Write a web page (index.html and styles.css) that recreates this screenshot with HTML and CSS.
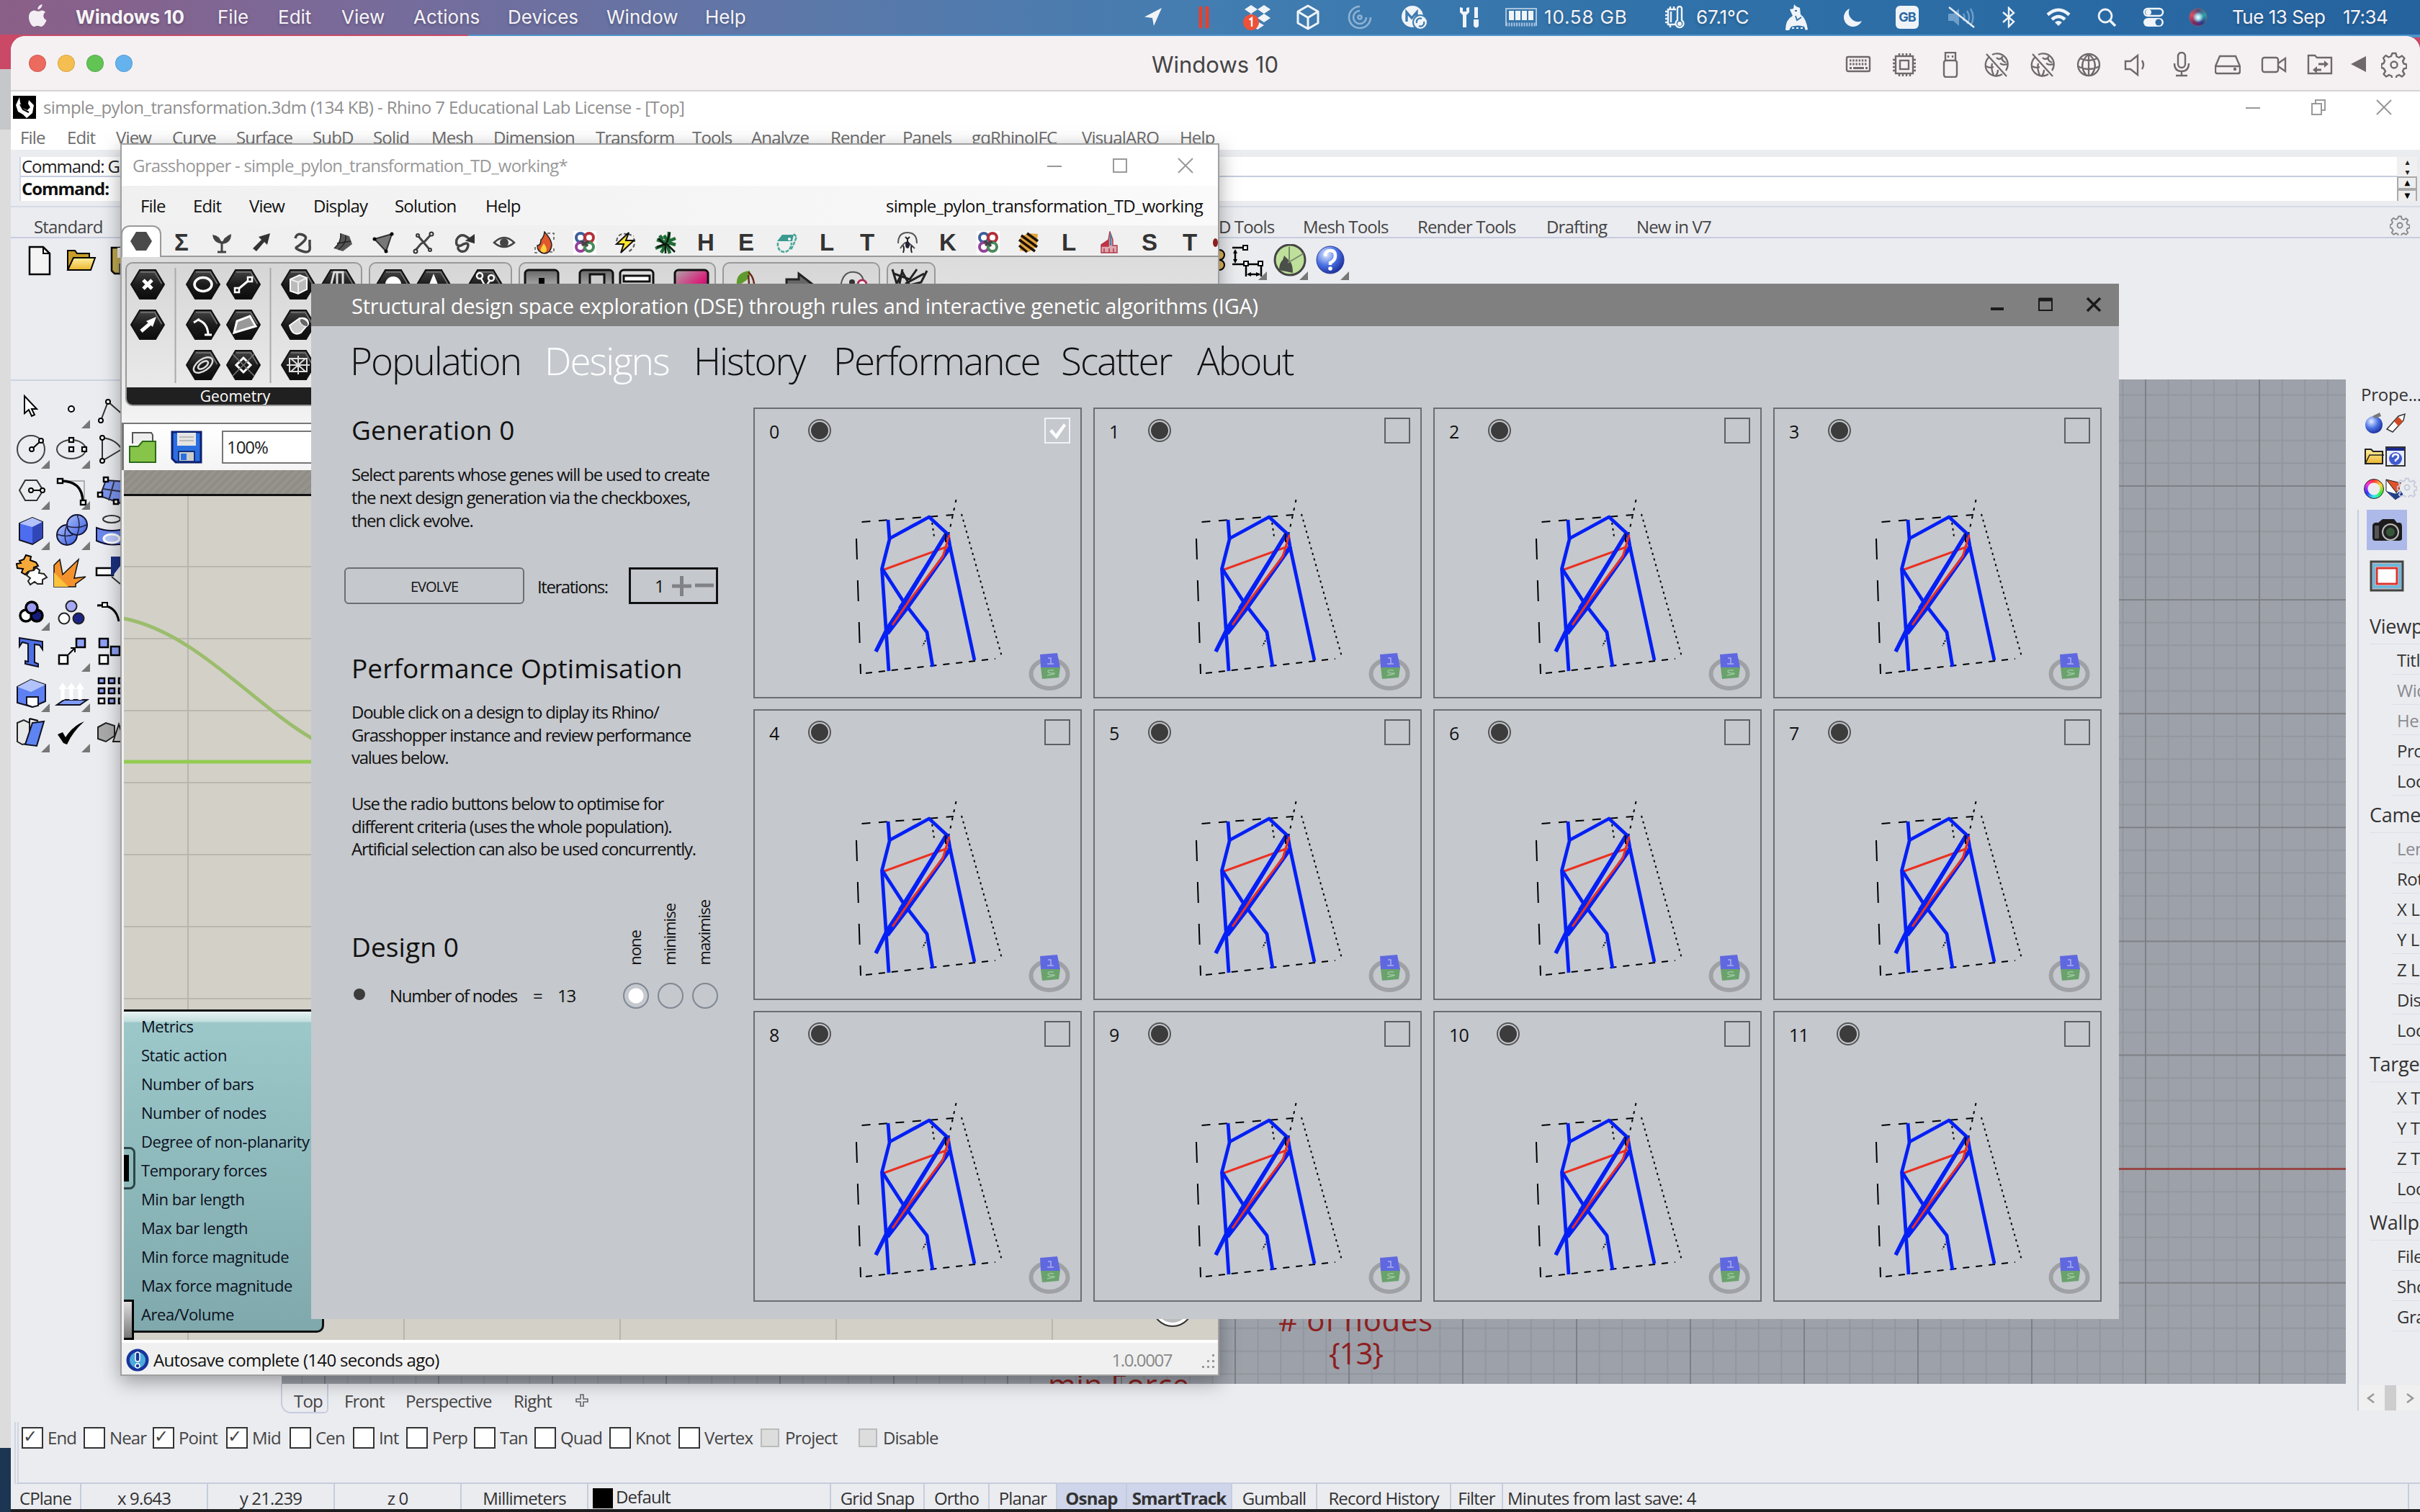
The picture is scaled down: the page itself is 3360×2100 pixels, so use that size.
FILE: index.html
```html
<!DOCTYPE html>
<html lang="en">
<head>
<meta charset="utf-8">
<title>Windows 10</title>
<link rel="stylesheet" href="styles.css">
</head>
<body>
<svg width="0" height="0" class="defs">
  <defs>
    <linearGradient id="gBlue" x1="0" y1="0" x2="1" y2="1"><stop offset="0" stop-color="#a9bdf8"/><stop offset="1" stop-color="#3a5fe0"/></linearGradient>
    <linearGradient id="gHex" x1="0" y1="0" x2="0" y2="1"><stop offset="0" stop-color="#454545"/><stop offset=".5" stop-color="#1c1c1c"/><stop offset="1" stop-color="#0c0c0c"/></linearGradient>
    <linearGradient id="gYel" x1="0" y1="0" x2="0" y2="1"><stop offset="0" stop-color="#fff0a0"/><stop offset="1" stop-color="#eab530"/></linearGradient>
    <linearGradient id="gGrey" x1="0" y1="0" x2="0" y2="1"><stop offset="0" stop-color="#666"/><stop offset="1" stop-color="#eee"/></linearGradient>
    <linearGradient id="gPink" x1="0" y1="0" x2=".8" y2="1"><stop offset="0" stop-color="#aaa"/><stop offset=".6" stop-color="#d8207a"/><stop offset="1" stop-color="#70106a"/></linearGradient>
    <radialGradient id="gBall" cx=".35" cy=".3" r=".8"><stop offset="0" stop-color="#e6eeff"/><stop offset=".5" stop-color="#4a72e4"/><stop offset="1" stop-color="#12228c"/></radialGradient>
    <symbol id="tri" viewBox="0 0 12 12"><path d="M12 0V12H0Z" fill="#777"/></symbol>
    <symbol id="hex" viewBox="0 0 48 42"><path d="M13 1H35L47 21L35 41H13L1 21Z" fill="url(#gHex)" stroke="#111" stroke-width="2"/><path d="M14 4H34L43.500 20" fill="none" stroke="#777" stroke-width="1.500"/></symbol>
    <symbol id="gear" viewBox="0 0 36 36"><g fill="none" stroke="currentColor" stroke-width="2.400"><circle cx="18" cy="18" r="4.500"/><path stroke-linejoin="round" d="M15.500 2h5l1 4.500 3.500 1.500 4-2.500 3.500 3.500-2.500 4 1.500 3.500 4 1v5l-4 1-1.500 3.500 2.500 4-3.500 3.500-4-2.500-3.500 1.500-1 4h-5l-1-4-3.500-1.500-4 2.500-3.500-3.500 2.500-4L3.500 23l-3-1v-5l3-1L5 12.500 3 8.500 6.500 5l4 2.500L14 6Z"/></g></symbol>
    <symbol id="netoff" viewBox="0 0 36 36"><g fill="none" stroke="currentColor" stroke-width="2.300"><path d="M7 8A15 15 0 0 0 26 31M12 4A15 15 0 0 1 31 26M4 3L32 34M18 8q3 4 8 0M26 6q-2 6 5 9M23 16q4 3 10 1M4 20q4 3 10 1M12 16q-2 8 2 16M20 25q0 5-3 8"/></g></symbol>
    <symbol id="pylon" viewBox="0 0 455 403">
      <g fill="none" stroke="#000" stroke-width="2">
        <path d="M150.500 158L278 148" stroke-dasharray="12 11.500"/>
        <path d="M143 181L149 369" stroke-dasharray="29 29"/>
        <path d="M156 368L336 348" stroke-dasharray="9 9"/>
        <path d="M289 147L345 345" stroke-dasharray="3 5"/>
        <path d="M281.500 127L262.500 216" stroke-dasharray="4 7.500"/>
        <path d="M247 151L251.500 182" stroke-dasharray="3 5"/>
        <path d="M241 319L235 330" stroke-dasharray="2 2"/>
      </g>
      <path d="M179 225L270 192" fill="none" stroke="#ea3022" stroke-width="3"/>
      <g fill="none" stroke="#0420f5" stroke-width="4.800" stroke-linejoin="round">
        <path d="M187 155L189 182L178.500 223L188 365"/>
        <path d="M189 181L244 151L270 175L273 192L307 350"/>
        <path d="M179 223L210 271L241 311L249 359"/>
        <path d="M268 174L211 268L186 306L170 338" stroke-width="5.500"/>
        <path d="M274 192L216 274L186 313" stroke-width="5.500"/>
        <path d="M264 181L203 278"/>
      </g>
      <path d="M272 176L263 206L216 268L193 301" fill="none" stroke="#ea3022" stroke-width="3"/>
      <path d="M267 174V186" stroke="#000" stroke-width="2"/>
      <ellipse cx="411" cy="369" rx="25.500" ry="20" fill="none" stroke="#9fa1a4" stroke-width="6"/>
      <path d="M398 342L422 340L426 360H399Z" fill="#6068e0"/><path d="M399 360H426L424 374L401 376Z" fill="#6aa26c"/>
      <path d="M409 347h4v8m-5 0h9" fill="none" stroke="#a9aeee" stroke-width="1.500"/><path d="M417 364q-8-1-8 1.500t7 2.500-8 3" fill="none" stroke="#9cc79e" stroke-width="1.500"/>
    </symbol>
  </defs>
</svg>

<header class="menubar">
  <svg class="apple" width="28" height="34" viewBox="0 0 28 34"><path fill="#f3eef3" d="M19.500 1c.3 3.500-2.500 7-6 7.200C13 5 16 1.500 19.500 1ZM24 12c-4 2.500-3.500 9 1.500 11-1.500 4.500-4.500 9-7.500 9-2 0-2.500-1.200-4.700-1.200S10.200 32 8.500 32C5 32 1 25 1 19c0-6 3.700-9.500 7.500-9.500 2.200 0 3.500 1.300 5.300 1.300 1.700 0 3-1.400 5.700-1.400 1.800 0 3.500 1 4.500 2.600Z"/></svg>
  <nav class="mac-menu"><b>Windows 10</b><span>File</span><span>Edit</span><span>View</span><span>Actions</span><span>Devices</span><span>Window</span><span>Help</span></nav>
  <div class="mac-status">
    <svg width="28" height="28" viewBox="0 0 28 28"><path fill="#f0f4f8" d="M26 1L2 13.500L13 15L15 26Z"/></svg>
    <svg width="18" height="32" viewBox="0 0 18 32"><path stroke="#e5412c" stroke-width="5" stroke-linecap="round" d="M4 3V29M13 3V29"/></svg>
    <svg width="42" height="38" viewBox="0 0 42 38"><path fill="#f0f4f8" d="M12 2l9 6-9 6-9-6zM30 2l9 6-9 6-9-6zM12 14l9 6-9 6-9-6zM30 14l9 6-9 6-9-6zM21 25l9 5-9 6-9-6z"/><circle cx="12" cy="26" r="11" fill="#ee5138"/><path d="M9.500 22.500L13 20V32" fill="none" stroke="#fff" stroke-width="2.400"/></svg>
    <svg width="32" height="36" viewBox="0 0 32 36"><path fill="none" stroke="#f0f4f8" stroke-width="3" stroke-linejoin="round" d="M16 2L30 10V26L16 34L2 26V10ZM2 10L16 18.500L30 10M16 18.500V34"/></svg>
    <svg width="34" height="34" viewBox="0 0 34 34"><g fill="none" stroke="#8fb2d3" stroke-width="2.600"><path d="M17 2A15 15 0 1 0 32 17"/><path d="M17 8A9 9 0 1 0 26 17"/><circle cx="17" cy="17" r="2.500"/></g></svg>
    <svg width="38" height="34" viewBox="0 0 38 34"><circle cx="16" cy="16" r="15" fill="#f0f4f8"/><path d="M8 23V10L15 18L22 10V16" fill="none" stroke="#3e7bb0" stroke-width="3.400"/><circle cx="27" cy="24" r="10" fill="#f0f4f8" stroke="#3e7bb0" stroke-width="2"/><path d="M22 25a5 5 0 0 1 7-6M32 23a5 5 0 0 1-7 6" fill="none" stroke="#3e7bb0" stroke-width="2.200"/></svg>
    <svg width="30" height="32" viewBox="0 0 30 32"><path fill="#f0f4f8" d="M2 2v7l4 4v17h5V13l4-4V2l-4 1v5H6V3zM22 2h5v15h-5zM21 19h7v9q-3 5-7 0z"/></svg>
    <svg width="44" height="26" viewBox="0 0 44 26"><path d="M1 25V1H43V25" fill="none" stroke="#a9c4de" stroke-width="2"/><path d="M1 23H43" stroke="#a9c4de" stroke-width="5" stroke-dasharray="2 1.500"/><path d="M5 4h7v13H5zM14 4h7v13h-7zM23 4h7v13h-7zM32 4h7v13h-7z" fill="#f0f4f8"/></svg>
    <span class="val mem">10.58 GB</span>
    <svg width="28" height="32" viewBox="0 0 28 32"><g fill="none" stroke="#f0f4f8" stroke-width="2.400"><path d="M16 5H5V26H15M9 8v15M1 8h4M1 13h4M1 18h4M1 23h4M8 1v4M13 1v4M8 26v4"/><path d="M18 20V4a3 3 0 0 1 6 0v16a5.500 5.500 0 1 1-6 0Z"/></g><circle cx="21" cy="25" r="3" fill="#f0f4f8"/></svg>
    <span class="val temp">67.1°C</span>
    <svg width="36" height="38" viewBox="0 0 36 38"><path fill="#f0f4f8" d="M14 1l3 3 5 2 1 9q8 6 10 21l-3 1-2-5q-8-3-18 0l-3 5-5 0Q2 22 12 17l-4-9 5-1z"/><path d="M15 10h3M16 17l2 6 6-4" fill="none" stroke="#2f6fa8" stroke-width="1.800"/><path d="M11 34h3M17 34h3M23 34h3" stroke="#f0f4f8" stroke-width="2"/></svg>
    <svg width="28" height="28" viewBox="0 0 28 28"><path fill="#f0f4f8" d="M9 2A13 13 0 1 0 26 19A13 13 0 0 1 9 2Z"/></svg>
    <b class="gb">GB</b>
    <svg width="38" height="30" viewBox="0 0 38 30"><path d="M1 10h7l8-7v24l-8-7H1z" fill="#6f9fca"/><path d="M22 10q3 5 0 10M27 6q6 9 0 18M32 3q7 12 0 24" fill="none" stroke="#6f9fca" stroke-width="2.400"/><path d="M2 1L37 29" stroke="#e8eef5" stroke-width="2.400"/></svg>
    <svg width="20" height="30" viewBox="0 0 20 30"><path fill="none" stroke="#f0f4f8" stroke-width="2.400" d="M2 8L17 21L10 28V2L17 9L2 22"/></svg>
    <svg width="34" height="26" viewBox="0 0 34 26"><g fill="none" stroke="#f0f4f8" stroke-width="4.500"><path d="M2 9.500Q17-4 32 9.500M8 16q9-8 18 0"/></g><path d="M12 20q5-4 10 0l-5 5z" fill="#f0f4f8"/></svg>
    <svg width="26" height="26" viewBox="0 0 26 26"><g fill="none" stroke="#f0f4f8" stroke-width="2.800"><circle cx="11" cy="11" r="9"/><path d="M17.500 17.500L25 25" stroke-width="3.500"/></g></svg>
    <svg width="30" height="28" viewBox="0 0 30 28"><rect x="2" y="2" width="26" height="10" rx="5" fill="none" stroke="#f0f4f8" stroke-width="2.500"/><circle cx="8" cy="7" r="4" fill="#f0f4f8"/><rect x="1" y="15" width="28" height="12" rx="6" fill="#f0f4f8"/><circle cx="22" cy="21" r="4.500" fill="#2c69a4"/></svg>
    <i class="siri"></i>
    <span class="date">Tue 13 Sep</span><span class="val">17:34</span>
  </div>
</header>
<div class="behind"></div>

<main class="vm">
  <div class="vm-title">
    <div class="lights"><i></i><i></i><i></i><i></i></div>
    <h1>Windows 10</h1>
    <div class="vm-tools">
      <svg viewBox="0 0 36 36"><rect x="2" y="7" width="32" height="20" rx="2" fill="none" stroke="currentColor" stroke-width="2.400"/><path d="M6 12h24M6 17h24" stroke="currentColor" stroke-width="3" stroke-dasharray="2.500 1.700"/><path d="M6 22.500h3M11 22.500h15M28 22.500h3" stroke="currentColor" stroke-width="3"/></svg>
      <svg viewBox="0 0 36 36"><g fill="none" stroke="currentColor" stroke-width="2.400"><rect x="6" y="6" width="24" height="24"/><rect x="12" y="12" width="12" height="12"/><path d="M11 2v4M16 2v4M21 2v4M26 2v4M11 30v4M16 30v4M21 30v4M26 30v4M2 11h4M2 16h4M2 21h4M2 26h4M30 11h4M30 16h4M30 21h4M30 26h4"/></g></svg>
      <svg viewBox="0 0 36 36"><g fill="none" stroke="currentColor" stroke-width="2.400"><path d="M11 12V1H25V12"/><rect x="9" y="12" width="18" height="23" rx="3"/><path d="M15 5v3M21 5v3"/></g></svg>
      <svg viewBox="0 0 36 36"><use href="#netoff"/></svg>
      <svg viewBox="0 0 36 36"><use href="#netoff"/></svg>
      <svg viewBox="0 0 36 36"><g fill="none" stroke="currentColor" stroke-width="2.300"><circle cx="18" cy="18" r="15"/><path d="M18 3V33M3 20q15 8 30 0M6 9q12 6 24 0M18 3q-16 14-3 30M18 3q16 14 3 30"/></g></svg>
      <svg viewBox="0 0 36 36"><path fill="none" stroke="currentColor" stroke-width="2.400" d="M4 13v11h7l10 8V5L11 13ZM27 12q4 6 0 12"/></svg>
      <svg viewBox="0 0 36 36"><g fill="none" stroke="currentColor" stroke-width="2.400"><rect x="13" y="1" width="10" height="21" rx="5"/><path d="M8 16q0 11 10 11t10-11M18 27v6M10 33h16"/></g></svg>
      <svg viewBox="0 0 36 36"><g fill="none" stroke="currentColor" stroke-width="2.400"><path d="M1 20L7 6H29L35 20V27Q35 30 32 30H4Q1 30 1 27ZM1 20H35"/><circle cx="28" cy="24" r="1"/></g></svg>
      <svg viewBox="0 0 36 36"><g fill="none" stroke="currentColor" stroke-width="2.400"><rect x="2" y="8" width="22" height="20" rx="3"/><path d="M24 16L34 9V27L24 20"/></g></svg>
      <svg viewBox="0 0 36 36"><path fill="none" stroke="currentColor" stroke-width="2.400" d="M2 30V5H11L14 8H34V30Z"/><path fill="none" stroke="currentColor" stroke-width="3" d="M16 17h9M11 25h9"/><path fill="currentColor" d="M24 12l6 5-6 5zM14 20l-6 5 6 5z"/></svg>
      <svg viewBox="0 0 36 36"><path fill="currentColor" d="M28 6V28L7 17Z"/></svg>
      <svg viewBox="0 0 36 36"><use href="#gear"/></svg>
    </div>
  </div>

  <div class="rh-title">
    <svg width="32" height="32" viewBox="0 0 32 32"><rect width="32" height="32" fill="#000"/><path fill="#fff" d="M9 2l-5 11 3 9 7 4 5 5 8-7 2-11-7-7-1 5 3 5-4 4-7-3-3-8z"/><path d="M10 12l4 7 8 4" fill="none" stroke="#000" stroke-width="2"/></svg>
    <span>simple_pylon_transformation.3dm (134 KB) - Rhino 7 Educational Lab License - [Top]</span>
    <div class="winbtns rh-btns"><svg viewBox="0 0 24 24"><path d="M2 13H22"/></svg><svg viewBox="0 0 24 24"><path d="M3 7h13v15H3zM8 7V2H21V16H16"/></svg><svg viewBox="0 0 24 24"><path d="M2 2L22 22M22 2L2 22"/></svg></div>
  </div>
  <nav class="rh-menu"><span>File</span><span>Edit</span><span>View</span><span>Curve</span><span>Surface</span><span>SubD</span><span>Solid</span><span>Mesh</span><span>Dimension</span><span>Transform</span><span>Tools</span><span>Analyze</span><span>Render</span><span>Panels</span><span>gqRhinoIFC</span><span>VisualARQ</span><span>Help</span></nav>
  <section class="command">
    <div class="cmd-lines"><p>Command: G</p><p><b>Command:</b></p></div>
    <div class="cmd-scroll"><i>▴</i><i>▾</i><b>▲</b><b>▼</b></div>
  </section>
  <nav class="rh-tabs"><span class="std">Standard</span><span>3D Tools</span><span>Mesh Tools</span><span>Render Tools</span><span>Drafting</span><span>New in V7</span><svg width="28" height="28"><use href="#gear"/></svg></nav>
  <section class="rh-toolbar">
    <svg width="36" height="44" viewBox="0 0 36 44"><path d="M4 3H23L32 12V41H4Z" fill="#f4f4f4" stroke="#000" stroke-width="2.500"/><path d="M23 3V12H32" fill="none" stroke="#000" stroke-width="2"/></svg>
    <svg width="42" height="44" viewBox="0 0 42 44"><path d="M2 34V8H12L15 12H32V18" fill="#c99d28" stroke="#000" stroke-width="2"/><path d="M2 35L10 18H40L34 35Z" fill="url(#gYel)" stroke="#000" stroke-width="2"/></svg>
    <svg width="40" height="44" viewBox="0 0 40 44"><path d="M2 4H38V40H6L2 36Z" fill="#c0a94f" stroke="#000" stroke-width="2.500"/><path d="M10 4H32V18H10Z" fill="#eee"/><path d="M12 26H30V40H12Z" fill="#555"/></svg>
    <svg class="push" width="14" height="44" viewBox="0 0 14 44"><circle cx="5" cy="15" r="7" fill="#e0b65a" stroke="#000" stroke-width="2"/><circle cx="5" cy="29" r="7" fill="#e0b65a" stroke="#000" stroke-width="2"/></svg>
    <svg width="50" height="50" viewBox="0 0 50 50"><path d="M2 5H18M2 28H40M21 30V45M42 30V45M24 42H40M6 9V24" fill="none" stroke="#000" stroke-width="2.500"/><path d="M6 7l3 6H3zM6 27l3-6H3zM22 42l6-3v6zM41 42l-6-3v6z"/><g fill="#fff" stroke="#000" stroke-width="2"><rect x="17" y="2" width="6" height="6"/><rect x="18" y="24" width="6" height="6"/><rect x="38" y="24" width="6" height="6"/></g><use href="#tri" x="38" y="38" width="12" height="12"/></svg>
    <svg width="54" height="50" viewBox="0 0 54 50"><circle cx="25" cy="22" r="21" fill="#bfe09a" stroke="#444" stroke-width="3"/><path d="M10 36q0-10 5-14l2-6 6 6q6 4 6 18Z" fill="#4a4f4a"/><path d="M22 26L44 13M24 4v20" stroke="#7a8a70" stroke-width="2"/><use href="#tri" x="38" y="38" width="12" height="12"/></svg>
    <svg width="50" height="50" viewBox="0 0 50 50"><circle cx="20" cy="22" r="19" fill="url(#gBall)" stroke="#2a3a9a"/><path d="M13 17q0-8 7-8t7 7-7 10v3" fill="none" stroke="#fff" stroke-width="4.500"/><circle cx="20" cy="34" r="2.800" fill="#fff"/><use href="#tri" x="34" y="38" width="12" height="12"/></svg>
  </section>

  <section class="rh-main">
    <div class="palette">
      <svg viewBox="0 0 56 56"><path d="M19 10V34L25 29L29 38L33 36L29 28H36Z" fill="#fff" stroke="#000" stroke-width="2"/></svg>
      <svg viewBox="0 0 56 56"><circle cx="28" cy="28" r="4" fill="#fff" stroke="#000" stroke-width="2"/><use href="#tri" x="42" y="43" width="12" height="12"/></svg>
      <svg viewBox="0 0 56 56"><path d="M13 44L23 18L46 38" fill="none" stroke="#333" stroke-width="2"/><circle cx="13" cy="44" r="3" fill="#fff" stroke="#000" stroke-width="2"/><circle cx="23" cy="18" r="3" fill="#fff" stroke="#000" stroke-width="2"/></svg>
      <svg viewBox="0 0 56 56"><circle cx="28" cy="28" r="19" fill="none" stroke="#444" stroke-width="2"/><path d="M29 28L42 16" stroke="#000" stroke-width="2"/><circle cx="29" cy="28" r="3" fill="#fff" stroke="#000" stroke-width="2"/><circle cx="42" cy="16" r="3" fill="#fff" stroke="#000" stroke-width="2"/><use href="#tri" x="42" y="43" width="12" height="12"/></svg>
      <svg viewBox="0 0 56 56"><ellipse cx="28" cy="28" rx="20" ry="13" fill="none" stroke="#444" stroke-width="2"/><g fill="#fff" stroke="#000" stroke-width="2.200"><rect x="25" y="12" width="6" height="6"/><rect x="25" y="25" width="6" height="6"/><rect x="43" y="25" width="6" height="6"/></g><use href="#tri" x="42" y="43" width="12" height="12"/></svg>
      <svg viewBox="0 0 56 56"><path d="M15 12Q34 14 42 28L15 44Z" fill="none" stroke="#333" stroke-width="2"/><circle cx="15" cy="12" r="3" fill="#fff" stroke="#000" stroke-width="2"/><circle cx="15" cy="44" r="3" fill="#fff" stroke="#000" stroke-width="2"/></svg>
      <svg viewBox="0 0 56 56"><path d="M12 28L20 14H36L45 28L36 42H20Z" fill="none" stroke="#333" stroke-width="2"/><path d="M28 28H44" stroke="#000" stroke-width="2"/><circle cx="28" cy="28" r="3" fill="#fff" stroke="#000" stroke-width="2"/><circle cx="44" cy="28" r="3" fill="#fff" stroke="#000" stroke-width="2"/><use href="#tri" x="42" y="43" width="12" height="12"/></svg>
      <svg viewBox="0 0 56 56"><path d="M12 15H46V42" fill="none" stroke="#999" stroke-width="1.500"/><path d="M12 15Q44 14 44 45" fill="none" stroke="#000" stroke-width="3.500"/><g fill="#fff" stroke="#000" stroke-width="2.400"><rect x="9" y="12" width="7" height="6"/><rect x="41" y="42" width="7" height="6"/></g><use href="#tri" x="42" y="43" width="12" height="12"/></svg>
      <svg viewBox="0 0 56 56"><path d="M20 14L48 16L40 46L12 36Z" fill="#7b95f0" stroke="#223" stroke-width="2"/><path d="M16 26L44 30M32 14L24 42" stroke="#334" stroke-width="2"/><g fill="#fff" stroke="#000" stroke-width="2.500"><rect x="17" y="10" width="6" height="6"/><rect x="9" y="31" width="6" height="6"/><rect x="31" y="41" width="6" height="6"/></g></svg>
      <svg viewBox="0 0 56 56"><path d="M12 18L30 10L44 16V38L30 47L12 41Z" fill="#4d6df0" stroke="#112" stroke-width="2"/><path d="M12 18L30 23L44 16L30 10Z" fill="#b2c2fa"/><path d="M30 23L44 16V38L30 46Z" fill="#3147b8"/><use href="#tri" x="42" y="43" width="12" height="12"/></svg>
      <svg viewBox="0 0 56 56"><circle cx="22" cy="34" r="14" fill="url(#gBlue)" stroke="#113" stroke-width="2"/><circle cx="36" cy="20" r="14" fill="url(#gBlue)" stroke="#113" stroke-width="2"/><path d="M22 20q-6 14 0 28M8 33q14 5 24 0M36 6q6 14 0 28M23 22q14 4 26-2" fill="none" stroke="#224" stroke-width="1.500"/><use href="#tri" x="42" y="43" width="12" height="12"/></svg>
      <svg viewBox="0 0 56 56"><ellipse cx="28" cy="12" rx="12" ry="5" fill="none" stroke="#333" stroke-width="2"/><path d="M7 24Q28 32 50 24V44Q28 52 7 42Z" fill="#6b88ee" stroke="#113" stroke-width="2"/><ellipse cx="28" cy="39" rx="11" ry="6" fill="#b9c8fa" stroke="#fff" stroke-width="3"/></svg>
      <svg viewBox="0 0 56 56"><path d="M12 14l6-2 3-6 7 2-1 5 8 3 3 5-6 2-1 7-7-1-4 4-5-3 2-5-8-1-1-6 6-1z" fill="#f5a93a" stroke="#000" stroke-width="2"/><path d="M26 28l6-1 3-4 5 4-1 4 7 1 4 5-6 3 0 6-7 0-4-3-6 4-3-5 3-4-5-4z" fill="#fff" stroke="#222" stroke-width="2"/></svg>
      <svg viewBox="0 0 56 56"><path d="M4 50V20L12 12L16 33L38 12L32 38L48 36L34 46V50Z" fill="#f3922c" stroke="#111" stroke-width="1.500"/><path d="M4 50V30L24 50Z" fill="#fbc23c"/></svg>
      <svg viewBox="0 0 56 56"><path d="M7 24H30V34H7Z" fill="#fff" stroke="#000" stroke-width="2.500"/><path d="M27 8H50L30 34H27Z" fill="#1b3180"/><path d="M28 36L40 46" stroke="#333" stroke-width="2"/></svg>
      <svg viewBox="0 0 56 56"><g stroke="#000" stroke-width="3.500"><circle cx="21" cy="34" r="8" fill="#fff"/><circle cx="36" cy="34" r="8" fill="#151b78"/><circle cx="29" cy="23" r="8" fill="#9a9af2"/></g><use href="#tri" x="42" y="43" width="12" height="12"/></svg>
      <svg viewBox="0 0 56 56"><g stroke="#222" stroke-width="2"><circle cx="18" cy="38" r="7.500" fill="#fff"/><circle cx="38" cy="38" r="7.500" fill="#1c2488"/><circle cx="28" cy="21" r="7.500" fill="#a6a8f6"/></g></svg>
      <svg viewBox="0 0 56 56"><path d="M8 20Q34 18 38 42" fill="none" stroke="#000" stroke-width="3"/><rect x="15" y="16" width="7" height="6" fill="#fff" stroke="#000" stroke-width="2"/></svg>
      <svg viewBox="0 0 56 56"><path d="M12 8L44 13V24L40 18L33 17V42L38 44V48L20 44V40L24 41V16L16 14L12 20Z" fill="#4d70e4" stroke="#112" stroke-width="2"/></svg>
      <svg viewBox="0 0 56 56"><g stroke="#000" stroke-width="2.500"><rect x="11" y="32" width="12" height="12" fill="#fff"/><rect x="35" y="9" width="12" height="12" fill="#8fa2f6"/></g><path d="M24 31L33 22M27 22h6v6" fill="none" stroke="#000" stroke-width="2"/><use href="#tri" x="42" y="43" width="12" height="12"/></svg>
      <svg viewBox="0 0 56 56"><g stroke="#000" stroke-width="2.500"><rect x="11" y="9" width="12" height="12" fill="#8fa2f6"/><rect x="11" y="32" width="12" height="12" fill="#fff"/><rect x="27" y="20" width="12" height="12" fill="#8fa2f6"/></g></svg>
      <svg viewBox="0 0 56 56"><path d="M9 20L28 10L48 17V40L30 48L9 42Z" fill="#5d80f2" stroke="#112" stroke-width="2"/><path d="M9 20L28 27L48 17L28 10Z" fill="#b2c2fa"/><path d="M22 34H38V46L30 48L22 45Z" fill="#fff" stroke="#112" stroke-width="2"/><use href="#tri" x="42" y="43" width="12" height="12"/></svg>
      <svg viewBox="0 0 56 56"><path d="M8 45L18 38H50L40 45Z" fill="#7f9cf4" stroke="#112" stroke-width="2"/><path d="M16 38V22M28 38V22M40 38V22" stroke="#fff" stroke-width="5"/><path d="M16 14l6 9H10zM28 14l6 9H22zM40 14l6 9H34z" fill="#fff"/><use href="#tri" x="42" y="43" width="12" height="12"/></svg>
      <svg viewBox="0 0 56 56"><g stroke="#000" stroke-width="2.500" fill="#8fa2f6"><rect x="10" y="8" width="8" height="7"/><rect x="24" y="8" width="8" height="7"/><rect x="38" y="8" width="8" height="7"/><rect x="10" y="22" width="8" height="7"/><rect x="24" y="22" width="8" height="7"/><rect x="38" y="22" width="8" height="7"/><rect x="10" y="36" width="8" height="7" fill="#fff"/><rect x="24" y="36" width="8" height="7"/><rect x="38" y="36" width="8" height="7"/></g></svg>
      <svg viewBox="0 0 56 56"><path d="M9 14L18 10L26 14V42L16 44L9 40Z" fill="#e8e8e8" stroke="#222" stroke-width="2"/><path d="M30 14L46 12L36 46L20 44Z" fill="#5d84f2" stroke="#112" stroke-width="2"/><path d="M26 8V14M26 8L38 11" stroke="#000" stroke-width="2"/><use href="#tri" x="42" y="43" width="12" height="12"/></svg>
      <svg viewBox="0 0 56 56"><path d="M9 30L16 27L20 34Q30 18 46 12Q30 26 22 44L17 42Z" fill="#000"/><use href="#tri" x="42" y="43" width="12" height="12"/></svg>
      <svg viewBox="0 0 56 56"><path d="M9 20L20 14L32 18V32L20 40L9 36Z" fill="#a9a9a9" stroke="#222" stroke-width="2"/><path d="M38 16L30 40H46Z" fill="#ccc" stroke="#222" stroke-width="2"/></svg>
    </div>
    <div class="center">
      <div class="viewport">
        <svg width="2866" height="1395">
          <defs><pattern id="grid" x="60" y="148" width="158" height="158.100" patternUnits="userSpaceOnUse">
            <path d="M31.600 0V159M63.200 0V159M94.800 0V159M126.400 0V159M0 31.600H158M0 63.200H158M0 94.900H158M0 126.500H158" stroke="#92969d" stroke-width="2"/>
            <path d="M0 0V159M158 0V159M0 0H158M0 158H158" stroke="#7d8083" stroke-width="2"/></pattern></defs>
          <rect width="2866" height="1395" fill="#9da1aa"/><rect width="2866" height="1395" fill="url(#grid)"/>
          <path d="M0 1096.500H2866" stroke="#964646" stroke-width="3"/>
          <g class="tagtext"><text x="1384" y="1322" textLength="214">#&#160;of nodes</text><text x="1454" y="1368" textLength="76">{13}</text><text x="1064" y="1412" textLength="196">min Force</text></g>
        </svg>
      </div>
      <nav class="vp-tabs"><span class="on">Top</span><span>Front</span><span>Perspective</span><span>Right</span><svg width="20" height="20" viewBox="0 0 20 20"><path d="M8 2h4v6h6v4h-6v6H8v-6H2V8h6z" fill="none" stroke="#666" stroke-width="1.600"/></svg></nav>
    </div>
    <aside class="props">
      <h2>Prope...</h2>
      <div class="prop-icons">
        <svg viewBox="0 0 28 32"><circle cx="14" cy="18" r="12" fill="url(#gBall)"/><path d="M12 6l10-5 2 5-8 3z" fill="#777"/></svg>
        <svg viewBox="0 0 28 32"><path d="M2 24L18 6L27 3L25 12L10 28Z" fill="#fff" stroke="#333" stroke-width="1.500"/><path d="M12 13l6-6 6 6-6 7z" fill="#d04a22"/></svg>
        <svg viewBox="0 0 28 32"><path d="M2 26V6H10L13 9H26V26Z" fill="url(#gYel)" stroke="#222" stroke-width="2"/><path d="M2 26L8 14H28" fill="none" stroke="#222" stroke-width="1.500"/></svg>
        <svg viewBox="0 0 28 32"><rect x="1" y="3" width="26" height="26" fill="#e8ecff" stroke="#333" stroke-width="2"/><path d="M2 6H26" stroke="#1b2a90" stroke-width="4"/><circle cx="14" cy="19" r="9" fill="#3f5bd0"/><path d="M10 17q0-4 4-4t4 3-4 5v2" fill="none" stroke="#fff" stroke-width="2.500"/></svg>
        <i class="wheel"></i>
        <svg viewBox="0 0 28 32"><path d="M1 2L26 8L15 20Z" fill="#e0522a" stroke="#222"/><path d="M1 2V18L14 30L15 20Z" fill="#fff" stroke="#222"/><path d="M1 18L14 30L24 24V15L15 22Z" fill="#23408c"/></svg>
        <svg class="cog" viewBox="0 0 36 36"><circle cx="18" cy="18" r="13" fill="#ebecf0"/><use href="#gear"/></svg>
      </div>
      <div class="prop-body">
        <svg class="cam" viewBox="0 0 56 56"><path d="M8 22Q9 17 16 18L22 13H38L42 18H46Q49 18 49 24V40Q49 43 45 43H12Q8 43 8 39Z" fill="#1c1c1c"/><path d="M11 22h6v18h-6z" fill="#555"/><circle cx="33" cy="31" r="11" fill="#222" stroke="#bbb" stroke-width="2"/><circle cx="33" cy="31" r="6" fill="#35563a"/></svg>
        <svg class="view" viewBox="0 0 48 44"><rect x="2" y="2" width="44" height="40" fill="#bbb" stroke="#444" stroke-width="3"/><rect x="6" y="7" width="36" height="30" fill="#fff" stroke="#6fb8dc" stroke-width="4"/><rect x="10" y="11" width="28" height="22" fill="#fff" stroke="#d8332c" stroke-width="3"/></svg>
        <h3>Viewport</h3><p>Title</p><p class="off">Width</p><p class="off">Height</p><p>Projection</p><p>Locked</p>
        <h3>Camera</h3><p class="off">Lens Length</p><p>Rotation</p><p>X Location</p><p>Y Location</p><p>Z Location</p><p>Distance</p><p>Location</p>
        <h3>Target</h3><p>X Target</p><p>Y Target</p><p>Z Target</p><p>Location</p>
        <h3>Wallpaper</h3><p>Filename</p><p>Show</p><p>Gray</p>
        <div class="hscroll"><svg viewBox="0 0 14 16"><path d="M11 2L3 8L11 14"/></svg><i></i><svg viewBox="0 0 14 16"><path d="M3 2L11 8L3 14"/></svg></div>
      </div>
    </aside>
  </section>
  <section class="osnap">
    <span class="on">End</span><span>Near</span><span class="on">Point</span><span class="on">Mid</span><span>Cen</span><span>Int</span><span>Perp</span><span>Tan</span><span>Quad</span><span>Knot</span><span>Vertex</span><span class="dis">Project</span><span class="dis">Disable</span>
  </section>
  <footer class="status"><span>CPlane</span><span>x 9.643</span><span>y 21.239</span><span>z 0</span><span>Millimeters</span><span class="layer">Default</span><span>Grid Snap</span><span>Ortho</span><span>Planar</span><b>Osnap</b><b>SmartTrack</b><span>Gumball</span><span>Record History</span><span>Filter</span><span class="last">Minutes from last save: 4</span></footer>
</main>

<section class="gh">
  <div class="gh-title"><span>Grasshopper - simple_pylon_transformation_TD_working*</span>
    <div class="winbtns gh-btns"><svg viewBox="0 0 24 24"><path d="M2 13H22"/></svg><svg viewBox="0 0 24 24"><path d="M3 3h18v18H3z"/></svg><svg viewBox="0 0 24 24"><path d="M2 2L22 22M22 2L2 22"/></svg></div>
  </div>
  <nav class="gh-menu"><span>File</span><span>Edit</span><span>View</span><span>Display</span><span>Solution</span><span>Help</span><em>simple_pylon_transformation_TD_working</em></nav>
  <div class="gh-tabs">
    <span class="on"><svg viewBox="0 0 32 32"><path d="M9 2H23L31 15L23 28H9L1 15Z" fill="#4a4a4a"/></svg></span>
    <span>Σ</span>
    <span><svg viewBox="0 0 32 32"><path d="M16 28V14M10 29h12" stroke="#444" stroke-width="3" fill="none"/><path d="M16 18Q4 16 3 5Q14 6 16 18ZM16 18Q18 8 29 4Q29 17 16 18Z" fill="#444"/></svg></span>
    <span><svg viewBox="0 0 32 32"><path d="M27 3L23 19L19 15L8 28L3 24L15 12L11 8Z" fill="#333"/></svg></span>
    <span><svg viewBox="0 0 32 32"><path d="M6 10Q8 2 16 5T18 14 8 22 16 28 26 20V12" fill="none" stroke="#444" stroke-width="3.500"/></svg></span>
    <span><svg viewBox="0 0 32 32"><path d="M13 3L25 7L29 18L16 28L4 24Q14 16 13 3Z" fill="#555"/><path d="M13 3Q14 16 4 24M20 6Q22 16 10 26M8 17L27 14" stroke="#222" stroke-width="1.500" fill="none"/></svg></span>
    <span><svg viewBox="0 0 32 32"><path d="M4 11L28 4L20 28Z" fill="#777" stroke="#333" stroke-width="2"/><circle cx="4" cy="11" r="2.500"/><circle cx="28" cy="4" r="2.500"/><circle cx="20" cy="28" r="2.500"/></svg></span>
    <span><svg viewBox="0 0 32 32"><path d="M8 6L24 25M28 3L18 14L12 18L3 29" fill="none" stroke="#444" stroke-width="3"/><g fill="#eee" stroke="#333" stroke-width="2"><circle cx="5" cy="28" r="2.500"/><circle cx="27" cy="4" r="2.500"/><circle cx="25" cy="26" r="2"/><circle cx="8" cy="6" r="2"/></g></svg></span>
    <span><svg viewBox="0 0 32 32"><path d="M24 11Q12 0 6 12Q4 22 12 20Q22 14 22 20Q20 30 12 28Q6 26 9 20" fill="none" stroke="#444" stroke-width="3.500"/><path d="M20 13l10-7v10z" fill="#333" stroke="#333" stroke-width="2"/></svg></span>
    <span><svg viewBox="0 0 32 32"><path d="M2 16Q16 2 30 16Q16 28 2 16Z" fill="none" stroke="#444" stroke-width="2.500"/><circle cx="16" cy="16" r="6" fill="#444"/></svg></span>
    <span><svg viewBox="0 0 32 32"><path d="M20 3h9v9M29 24v5h-8M3 22v8h6" fill="none" stroke="#555" stroke-width="1.500" stroke-dasharray="4 3"/><path d="M16 1Q26 12 26 20Q24 31 16 31Q6 30 6 20Q11 20 11 12Q15 9 16 1Z" fill="#e0582c" stroke="#222" stroke-width="1.500"/><path d="M15 17Q23 28 15 30Q8 28 12 22Z" fill="#fbd13c"/></svg></span>
    <span class="flower"><svg viewBox="0 0 32 32"><g fill="none" stroke-width="4"><circle cx="10" cy="9" r="6" stroke="#3f5f9c"/><circle cx="22" cy="9" r="6" stroke="#b5303a"/><circle cx="10" cy="22" r="6" stroke="#93409a"/><circle cx="22" cy="22" r="6" stroke="#4b8a5a"/></g><path d="M10 14q6 2 10 7M22 14q-6 2-10 6" fill="none" stroke="#444" stroke-width="3"/></svg></span>
    <span><svg viewBox="0 0 32 32"><path d="M4 14Q6 2 18 4M28 10q4 12-8 19M20 4l8 3" fill="none" stroke="#555" stroke-width="2" stroke-dasharray="5 3"/><path d="M21 2L4 18H14L10 30L28 13H17Z" fill="#ffe42e" stroke="#111" stroke-width="2"/></svg></span>
    <span><svg viewBox="0 0 32 32"><path d="M20 16L14 6M20 14L21 1M20 14L30 10M18 16L4 12M18 18L2 24M16 20L10 30M18 18L22 31M20 16L30 19M12 12L8 6" stroke="#1d6b35" stroke-width="4.500"/><path d="M17 17L29 29M16 16V31M6 10L14 18M22 2L18 16M4 22L16 18" stroke="#0c1a10" stroke-width="2.500"/></svg></span>
    <span>H</span><span>E</span>
    <span><svg viewBox="0 0 32 32"><path d="M3 14L10 5L26 5L24 14H3Z" fill="#3d9a8e"/><path d="M4 16Q3 28 13 29Q22 28 23 16M26 4L30 8L26 18L22 26" fill="none" stroke="#4aa79a" stroke-width="2.500" stroke-dasharray="5 1.500"/><circle cx="20" cy="11" r="2" fill="#fff"/></svg></span>
    <span>L</span><span>T</span>
    <span><svg viewBox="0 0 32 32"><path d="M3 17Q3 2 16 2T29 17M6 24q6-10 10-8t10 8" fill="none" stroke="#555" stroke-width="2"/><path d="M13 8l3 3 3-3M16 11V22M10 30q2-6 0-10M22 30q-2-6 0-10" stroke="#222" stroke-width="2" fill="none"/><ellipse cx="16" cy="19" rx="3" ry="5" fill="#223"/></svg></span>
    <span>K</span>
    <span class="flower"><svg viewBox="0 0 32 32"><g fill="none" stroke-width="4"><circle cx="10" cy="9" r="6" stroke="#3f5f9c"/><circle cx="22" cy="9" r="6" stroke="#b5303a"/><circle cx="10" cy="22" r="6" stroke="#93409a"/><circle cx="22" cy="22" r="6" stroke="#4b8a5a"/></g><path d="M10 14q6 2 10 7M22 14q-6 2-10 6" fill="none" stroke="#444" stroke-width="3"/></svg></span>
    <span><svg viewBox="0 0 32 32"><path d="M5 8L16 3L29 4L27 22L16 29L4 27Z" fill="#e2a23e"/><path d="M3 12L25 28M6 6L28 22M14 3L29 14M3 20L14 29" stroke="#1d1305" stroke-width="3.500"/></svg></span>
    <span>L</span>
    <span><svg viewBox="0 0 32 32"><path d="M17 1L21 12V20H27V30H5V19L15 12Z" fill="#d9a9b0" stroke="#b33a4a" stroke-width="1.500"/><path d="M5 20L15 13V21H5M9 24v6M16 24v6M22 24v6" fill="#bf3346" stroke="#bf3346" stroke-width="1.500"/><path d="M18 4V20" stroke="#4a8aa8" stroke-width="2.500"/></svg></span>
    <span>S</span><span>T</span><i class="dot"></i>
  </div>
  <div class="ribbon">
    <div class="panel p1">
      <svg width="327" height="172">
        <path d="M67.500 6V166M199.500 6V166" stroke="#aaa" stroke-width="2"/>
        <g><use href="#hex" x="5" y="8" width="48" height="42"/><use href="#hex" x="82" y="8" width="48" height="42"/><use href="#hex" x="138" y="8" width="48" height="42"/><use href="#hex" x="214" y="8" width="48" height="42"/><use href="#hex" x="270" y="8" width="48" height="42"/>
        <use href="#hex" x="5" y="64" width="48" height="42"/><use href="#hex" x="82" y="64" width="48" height="42"/><use href="#hex" x="138" y="64" width="48" height="42"/><use href="#hex" x="214" y="64" width="48" height="42"/>
        <use href="#hex" x="82" y="120" width="48" height="42"/><use href="#hex" x="138" y="120" width="48" height="42"/><use href="#hex" x="214" y="120" width="48" height="42"/></g>
        <g fill="none" stroke="#fff" stroke-width="4"><path d="M23 23L35 35M35 23L23 35" stroke-width="5"/><ellipse cx="106" cy="29" rx="12" ry="9.500" stroke-width="3.500"/><path d="M153 37L171 22" stroke-width="3"/><path d="M20 94L34 82" stroke-width="5"/><path d="M98 78Q112 82 113 98M93 82l8-5M108 99h10" stroke-width="3"/></g>
        <path d="M41 74L27 80L36 88Z" fill="#fff"/><g fill="#222" stroke="#fff" stroke-width="2.500"><rect x="150" y="34" width="6" height="6"/><rect x="168" y="19" width="6" height="6"/></g>
        <path d="M153 80L171 73L179 87L149 96Z" fill="#999" stroke="#fff" stroke-width="3"/>
        <path d="M227 22L240 16L250 20V36L238 42L227 38Z" fill="#bbb" stroke="#fff" stroke-width="2"/><path d="M227 22L238 26L250 20M238 26V42" fill="none" stroke="#eee" stroke-width="2"/><path d="M226 86L240 76Q252 74 252 84L242 96Q230 102 226 86Z" fill="#ccc" stroke="#fff" stroke-width="2"/><ellipse cx="246" cy="82" rx="7" ry="4" transform="rotate(40 246 82)" fill="#666" stroke="#fff"/>
        <g fill="none" stroke="#ddd" stroke-width="2.500"><ellipse cx="106" cy="141" rx="15" ry="8" transform="rotate(-35 106 141)"/><ellipse cx="106" cy="141" rx="8" ry="4" transform="rotate(-35 106 141)"/><path d="M162 131L172 141L162 151L152 141Z" stroke="#fff" stroke-width="3"/><path d="M147 126L177 156M177 126L147 156" stroke="#777" stroke-width="1.500"/><path d="M226 132h24v18h-24zM238 128v26M222 141h32M228 132l20 18M248 132l-20 18" stroke-width="2"/></g>
        <path d="M284 28L288 12H300V30M292 12V30" stroke="#ddd" stroke-width="3" fill="none"/>
      </svg>
      <h4>Geometry</h4>
    </div>
    <div class="panel"><svg width="195" height="60"><use href="#hex" x="8" y="8" width="48" height="42"/><use href="#hex" x="64" y="8" width="48" height="42"/><use href="#hex" x="136" y="8" width="48" height="42"/><circle cx="32" cy="29" r="11" fill="#fff"/><path d="M88 14L96 34H80Z" fill="#fff"/><g fill="none" stroke="#fff" stroke-width="2.500"><circle cx="152" cy="17" r="4"/><circle cx="168" cy="20" r="4"/><path d="M154 21L160 32L166 24"/></g></svg></div>
    <div class="panel"><svg width="270" height="60"><g stroke="#111" stroke-width="3"><rect x="7" y="9" width="46" height="44" rx="5" fill="url(#gGrey)"/><rect x="83" y="9" width="46" height="44" rx="5" fill="url(#gGrey)"/><rect x="139" y="9" width="46" height="44" rx="5" fill="#ddd"/><rect x="215" y="9" width="46" height="44" rx="5" fill="url(#gPink)"/></g><path d="M26 20h8v20h-8z"/><path d="M97 15h20v30H97z" fill="#ccc" stroke="#111" stroke-width="3"/><path d="M144 17h36v8h-36z" fill="#fff" stroke="#111" stroke-width="3"/></svg></div>
    <div class="panel"><svg width="215" height="60"><path d="M18 30Q16 12 36 10Q38 24 18 30Z" fill="#5e9a2c"/><path d="M34 12Q44 20 42 40M34 16L36 40" fill="none" stroke="#6a2a1c" stroke-width="2.500"/><path d="M87 22H104V14L122 28L106 44V34H87Z" fill="#666" stroke="#222" stroke-width="3"/><path d="M162 34Q164 10 182 12Q196 14 194 34Z" fill="#ddd" stroke="#555" stroke-width="2"/><circle cx="192" cy="29" r="6" fill="#fff" stroke="#b02a5a" stroke-width="3"/><circle cx="178" cy="26" r="4" fill="#333"/></svg></div>
    <div class="panel"><svg width="64" height="60"><path d="M6 8L12 28L20 12L30 30L46 26L54 10M8 14L30 22L40 8M24 28L50 14M20 8L16 28" fill="none" stroke="#222" stroke-width="3"/></svg></div>
  </div>
  <div class="gh-tools">
    <svg width="40" height="46" viewBox="0 0 40 46"><path d="M6 18V3H32L34 6V20" fill="#eee" stroke="#555" stroke-width="2"/><path d="M2 44V22H14L20 15H38V44Z" fill="#86c44a" stroke="#2d6a1a" stroke-width="2"/></svg>
    <svg width="46" height="46" viewBox="0 0 46 46"><path d="M3 2H43V44H8L3 39Z" fill="#2a6fe0" stroke="#0c1f6e" stroke-width="3"/><path d="M10 3H36V21H10Z" fill="#e4e4e4"/><path d="M13 9h20M13 14h20" stroke="#bbb" stroke-width="2"/><path d="M12 29H34V43H12Z" fill="#ccc" stroke="#12307e" stroke-width="2"/><path d="M15 32h8v9h-8z" fill="#2a6fe0"/></svg>
    <div class="zoom">100%</div>
  </div>
  <div class="gh-ruler"></div>
  <div class="gh-canvas">
    <svg class="wires" width="1518" height="1172"><path d="M0 170C100 190 180 290 262 337" fill="none" stroke="#9bbd6c" stroke-width="5"/><path d="M0 369H262" stroke="#92cc52" stroke-width="5"/><circle cx="1456" cy="1125" r="25" fill="#bbb" stroke="#fff" stroke-width="4"/><circle cx="1456" cy="1125" r="28" fill="none" stroke="#333" stroke-width="2"/><path d="M1442 1140l10-12 6 14" fill="#fff"/></svg>
    <ul class="metrics"><li>Metrics</li><li>Static action</li><li>Number of bars</li><li>Number of nodes</li><li>Degree of non-planarity</li><li>Temporary forces</li><li>Min bar length</li><li>Max bar length</li><li>Min force magnitude</li><li>Max force magnitude</li><li>Area/Volume</li></ul>
    <i class="plug"></i><i class="knob"></i>
  </div>
  <footer class="gh-status"><svg width="32" height="32" viewBox="0 0 32 32"><circle cx="16" cy="16" r="15.500" fill="#16359a"/><circle cx="16" cy="16" r="11" fill="#4da8dc"/><rect x="13" y="5" width="6" height="13" rx="3" fill="#16359a" stroke="#fff" stroke-width="1.500"/><circle cx="16" cy="24" r="3" fill="#16359a" stroke="#fff" stroke-width="1.500"/></svg><span>Autosave complete (140 seconds ago)</span><em>1.0.0007</em><svg class="grip" width="22" height="24" viewBox="0 0 22 24"><g fill="#999"><path d="M16 2h3v3h-3zM16 10h3v3h-3zM9 10h3v3H9zM16 18h3v3h-3zM9 18h3v3H9zM2 18h3v3H2z"/></g></svg></footer>
</section>

<section class="dse">
  <div class="dse-title"><span>Structural design space exploration (DSE) through rules and interactive genetic algorithms (IGA)</span>
    <div class="winbtns dse-btns"><svg viewBox="0 0 24 24"><path d="M3 18H21" stroke-width="4"/></svg><svg viewBox="0 0 24 24"><path d="M3 4h18v16H3z" stroke-width="2"/><path d="M3 5H21" stroke-width="5"/></svg><svg viewBox="0 0 24 24"><path d="M3 3L21 21M21 3L3 21" stroke-width="3.500"/></svg></div>
  </div>
  <nav class="dse-tabs"><span>Population</span><span class="on">Designs</span><span>History</span><span>Performance</span><span>Scatter</span><span>About</span></nav>
  <div class="dse-body">
    <aside>
      <h2>Generation 0</h2>
      <p class="intro">Select parents whose genes will be used to create<br>the next design generation via the checkboxes,<br>then click evolve.</p>
      <div class="evolve"><button>EVOLVE</button><label>Iterations:</label><div class="spin"><span>1</span><svg width="60" height="30" viewBox="0 0 60 30"><path d="M2 15H29M15.500 1V29M34 14H61" stroke="#808286" stroke-width="5"/></svg></div></div>
      <h2>Performance Optimisation</h2>
      <p class="opt">Double click on a design to diplay its Rhino/<br>Grasshopper instance and review performance<br>values below.<br><br>Use the radio buttons below to optimise for<br>different criteria (uses the whole population).<br>Artificial selection can also be used concurrently.</p>
      <div class="crit-head"><h2>Design 0</h2><span>none</span><span>minimise</span><span>maximise</span></div>
      <div class="crit-row"><i class="bullet"></i><span>Number of nodes</span><span>=</span><span>13</span><i class="radio on"></i><i class="radio"></i><i class="radio"></i></div>
    </aside>
    <div class="cards">
      <article><header><span>0</span><i></i><b class="on"><svg viewBox="0 0 32 32"><path d="M5 17L9 14L14 21L25 6L28 9L15 28Z" fill="#fff"/></svg></b></header><svg class="draw"><use href="#pylon"/></svg></article>
      <article><header><span>1</span><i></i><b></b></header><svg class="draw"><use href="#pylon"/></svg></article>
      <article><header><span>2</span><i></i><b></b></header><svg class="draw"><use href="#pylon"/></svg></article>
      <article><header><span>3</span><i></i><b></b></header><svg class="draw"><use href="#pylon"/></svg></article>
      <article><header><span>4</span><i></i><b></b></header><svg class="draw"><use href="#pylon"/></svg></article>
      <article><header><span>5</span><i></i><b></b></header><svg class="draw"><use href="#pylon"/></svg></article>
      <article><header><span>6</span><i></i><b></b></header><svg class="draw"><use href="#pylon"/></svg></article>
      <article><header><span>7</span><i></i><b></b></header><svg class="draw"><use href="#pylon"/></svg></article>
      <article><header><span>8</span><i></i><b></b></header><svg class="draw"><use href="#pylon"/></svg></article>
      <article><header><span>9</span><i></i><b></b></header><svg class="draw"><use href="#pylon"/></svg></article>
      <article><header><span>10</span><i></i><b></b></header><svg class="draw"><use href="#pylon"/></svg></article>
      <article><header><span>11</span><i></i><b></b></header><svg class="draw"><use href="#pylon"/></svg></article>
    </div>
  </div>
</section>
</body>
</html>
```

FILE: styles.css
```css
* { box-sizing: border-box; margin: 0; padding: 0; }
body { width: 3360px; height: 2100px; overflow: hidden; position: relative; font: 24px/32px "Open Sans", "Noto Sans", sans-serif; letter-spacing: -0.035em; color: #333; background: #dcdcdd; }
svg { display: block; flex: none; }
span, em, b, p, h1, h2, h3, h4, li { white-space: pre; }
em, i { font-style: normal; }
.defs { position: absolute; }

/* macOS menu bar */
.menubar { height: 48px; display: flex; align-items: center; padding-left: 39px; background: linear-gradient(90deg, #8b5f87 0, #7a6a99 460px, #5c78a9 1120px, #427db1 1700px, #3072a9 2300px, #25639f 3360px); color: #f6f3f7; font: 26px/48px Inter, sans-serif; letter-spacing: 0; text-shadow: 0 2px 4px rgba(0,0,0,.25); }
.apple { margin-top: -4px; }
.mac-menu { display: grid; grid-template-columns: 197px 84px 88px 100px 131px 137px 137px 100px; width: 974px; margin-left: 38px; }
.mac-menu b { letter-spacing: -0.3px; }
.mac-status { display: grid; grid-template-columns: 70px 72px 76px 64px 80px 72px 80px 64px 154px 53px 101px 86px 70px 80px 70px 62px 76px 58px 72px 52px 175px 90px; margin-left: 487px; align-items: center; justify-items: center; }
.mac-status .val { justify-self: start; letter-spacing: -0.5px; }
.mac-status .mem { letter-spacing: 0.8px; }
.mac-status .temp { letter-spacing: -0.1px; padding-left: 4px; }
.date { justify-self: start; padding-left: 21px; letter-spacing: -0.5px; }
.gb { width: 32px; height: 32px; border-radius: 6px; background: #f0f4f8; color: #2c6aa5; font-size: 18px; line-height: 32px; text-align: center; letter-spacing: -1px; text-shadow: none; }
.siri { width: 26px; height: 26px; border-radius: 50%; background: radial-gradient(circle, #fff 0, #9adbe8 20%, transparent 45%), conic-gradient(#5a4a7a, #2aa0a8, #2d3a8a, #7a2a60, #e04a60, #5a4a7a); border: 1px solid #667; }
.behind { position: absolute; left: 0; top: 48px; width: 3360px; height: 2052px; background: linear-gradient(90deg, transparent 650px, #4e94cb 650px) 0 0/100% 4px no-repeat, linear-gradient(#c94966 0 48px, #c6c7cb 48px 132px, #dcdcdd 132px 1963px, #1b3553 1963px); }

/* virtual machine window */
.vm { position: absolute; left: 15px; top: 50px; width: 3345px; height: 2050px; background: #ebecf0; border-radius: 20px 20px 0 0; overflow: hidden; border-bottom: 4px solid #1d1d1f; }
.vm-title { height: 77px; background: #f5f1f3; border-bottom: 2px solid #d6d3d5; display: grid; grid-template-columns: 1584px 963px 1fr; align-items: center; }
.lights { display: flex; gap: 16px; padding-left: 25px; }
.lights i { width: 24px; height: 24px; border-radius: 50%; background: #ec6a5e; border: 1px solid rgba(0,0,0,.12); }
.lights i:nth-child(2) { background: #f4bf50; }
.lights i:nth-child(3) { background: #61c455; }
.lights i:nth-child(4) { background: #64b3ee; }
.vm-title h1 { font: 400 31px/40px Inter, sans-serif; letter-spacing: 0; color: #444; padding-top: 5px; }
.vm-tools { display: flex; color: #6f696c; padding-top: 4px; gap: 28.100px; }
.vm-tools svg { width: 36px; height: 36px; }
.vm-tools svg:nth-last-child(2) { margin-left: -10px; }
.vm-tools svg:last-child { margin-left: -15px; }

.winbtns { display: flex; margin-left: auto; }
.winbtns svg { width: 24px; height: 24px; fill: none; stroke: #999; stroke-width: 2; }
.rh-title { height: 48px; background: #fff; display: flex; align-items: center; padding-left: 3px; color: #8f8f8f; padding-bottom: 5px; letter-spacing: -0.024em; }
.rh-title span { margin-left: 10px; }
.rh-btns { gap: 67px; margin-right: 38px; }
.rh-menu { height: 33px; background: #fff; padding-left: 13px; color: #6d6d6d; line-height: 31px; display: grid; grid-template-columns: 65px 68px 78px 89px 106px 84px 81px 86px 142px 134px 82px 110px 100px 96px 153px 136px 100px; }
.command { height: 80px; border-bottom: 2px solid #d6dae6; display: flex; padding: 10px 4px 7px 12px; color: #222; }
.cmd-lines { flex: 1; background: #fff; border-left: 2px solid #d2d8e4; }
.cmd-lines p { padding-left: 1px; height: 28px; line-height: 25px; border-bottom: 2px solid #c5cddd; letter-spacing: -0.045em; }
.cmd-lines p + p { border: 0; height: 34px; line-height: 31px; color: #111; }
.cmd-scroll { width: 28px; display: grid; grid-template-rows: 14px 13px 18px 18px; background: #f0f0f0; font: 12px/14px "DejaVu Sans", sans-serif; text-align: center; overflow: hidden; }
.cmd-scroll b { border: 2px solid #aaa; color: #000; background: #eee; font-size: 10px; line-height: 14px; }
.rh-tabs { height: 43px; border-bottom: 2px solid #c5cddd; display: grid; grid-template-columns: 1632px 130px 159px 179px 125px 1046px 28px; padding-left: 32px; line-height: 54px; color: #444; }
.rh-tabs svg { margin-top: 11px; color: #888; }
.rh-toolbar { height: 196px; padding: 9px 0 0 22px; display: flex; gap: 19px; }
.rh-toolbar svg:nth-child(n+4) { margin-right: -12px; margin-top: -1px; }
.rh-toolbar .push { margin-left: 1476px; }

.rh-main { height: 1448px; display: grid; grid-template-columns: 376px 2866px 103px; }
.palette { display: grid; grid-template-columns: 56px 56px 56px; grid-auto-rows: 56.250px; padding-top: 11px; align-content: start; border-top: 2px solid #ccd3e0; }
.palette svg { width: 56px; height: 56px; }
.viewport { height: 1395px; }
.tagtext { font-size: 42px; letter-spacing: 0; fill: #8c1f1f; }
.vp-tabs { display: grid; grid-template-columns: 88px 85px 150px 85px 20px; height: 53px; line-height: 47px; align-items: start; color: #444; margin-left: -1px; }
.vp-tabs .on { height: 41px; width: 66px; padding-left: 16px; border: solid #c5cddd; border-width: 0 2px 2px; border-radius: 0 0 6px 14px; }
.vp-tabs svg { margin-top: 13px; }

.props { overflow: hidden; padding-left: 16px; color: #333; }
.props h2 { font: inherit; padding-left: 5px; height: 44px; line-height: 41px; letter-spacing: -0.01em; }
.prop-icons { display: grid; grid-template-columns: 28px 28px; grid-auto-rows: 46px; column-gap: 2px; padding-left: 9px; height: 137px; position: relative; }
.prop-icons svg { width: 28px; height: 34px; }
.prop-icons .cog { position: absolute; left: 55px; top: 92px; width: 28px; height: 28px; color: #c5cbdb; }
.wheel { width: 28px; height: 28px; border-radius: 50%; background: radial-gradient(circle, #ebecf0 0 8px, transparent 9px), conic-gradient(#f33, #fd3, #3e3, #3ee, #33f, #e3e, #f33); border: 1.500px solid #222; margin-top: 2px; }
.prop-body { border-left: 2px solid #c5cfdd; border-bottom: 2px solid #c5cfdd; height: 1251px; }
.cam { width: 56px; height: 56px; background: #adb9e8; margin-left: 11px; }
.view { width: 48px; height: 44px; margin: 14px 0 21px 15px; }
.prop-body h3 { font: 400 27px/54px "Open Sans"; letter-spacing: -0.01em; height: 51.600px; margin-left: 15px; border-bottom: 1px solid #dcdfe9; }
.prop-body p { height: 42.100px; line-height: 43px; margin-left: 46px; padding-left: 7px; border-bottom: 1px solid #dcdfe9; letter-spacing: -0.02em; }
.prop-body .off { color: #8a8a8e; }
.hscroll { height: 35px; margin-top: 75px; background: #f0f0f0; display: flex; align-items: center; padding-left: 10px; gap: 12px; }
.hscroll svg { width: 14px; height: 16px; fill: none; stroke: #999; stroke-width: 2.500; }
.hscroll i { width: 16px; height: 35px; background: #cdcdcd; }

.osnap { height: 86px; border-left: 6px double #d0d6e2; margin-left: 5px; display: grid; grid-template-columns: 86px 96px 102px 88px 88px 74px 94px 84px 104px 96px 114px 136px 120px; padding-left: 4px; border-bottom: 2px solid #c5cddd; color: #444; line-height: 44px; }
.osnap span { display: flex; height: 44px; align-items: center; }
.osnap span::before { content: ""; width: 26px; height: 26px; border: 2px solid #333; background: #fff; margin-right: 6px; font: 24px/20px "DejaVu Sans"; }
.osnap .on::before { content: "✓"; line-height: 22px; }
.osnap .dis::before { width: 22px; height: 22px; border-color: #bbb; background: #ddd; margin-right: 8px; }
.status { height: 35px; line-height: 39px; display: grid; grid-template-columns: 98px 176px 176px 176px 176px 337px 130px 90px 94px 97px 146px 118px 186px 72px 1258px; text-align: center; color: #333; }
.status > * { border-right: 2px solid #c5cddd; overflow: hidden; }
.status b { background: #cfd5ea; }
.status .layer { text-align: left; display: flex; align-items: center; }
.layer::before { content: ""; width: 28px; height: 28px; background: #000; margin: 4px 4px 0 6px; }
.status .last { text-align: left; padding-left: 6px; letter-spacing: -0.03em; }

/* Grasshopper */
.gh { position: absolute; left: 167px; top: 199px; width: 1526px; height: 1712px; background: #f0f0f0; border: 2px solid #a0a0a0; box-shadow: 0 8px 26px rgba(0,0,0,.35); overflow: hidden; }
.gh-title { height: 57px; background: #fff; display: flex; align-items: center; padding-left: 15px; color: #999; letter-spacing: -0.033em; }
.gh-btns { gap: 67px; margin-right: 33px; }
.gh-menu { height: 55px; background: linear-gradient(90deg, #f0f0f0, #fafafa); display: grid; grid-template-columns: 73px 78px 89px 113px 126px 556px 1fr; padding-left: 26px; line-height: 55px; color: #111; }
.gh-menu em { letter-spacing: -0.03em; }
.gh-tabs { height: 44px; display: flex; border-bottom: 2px solid #999; font: 700 33px/44px "Liberation Sans", sans-serif; letter-spacing: 0; margin-left: -1px; }
.gh-tabs span { width: 56px; height: 44px; flex: none; display: flex; align-items: center; justify-content: center; color: #333; padding-top: 4px; }
.gh-tabs svg { width: 32px; height: 32px; }
.gh-tabs .on { background: #fff; border: 2px solid #999; border-bottom: 0; border-radius: 12px 12px 0 0; padding-top: 0; }
.gh-tabs .flower svg { background: #fff; }
.dot { width: 12px; height: 12px; border-radius: 50%; background: #8a1f1f; margin: 18px 0 0 4px; }
.ribbon { height: 230px; background: linear-gradient(#dcdcdc, #ececec 190px, #f4f4f4); display: flex; gap: 9px; padding: 7px 0 0 5px; }
.panel { height: 200px; border: 2px solid #999; border-radius: 10px; background: linear-gradient(#d6d6d6, #ececec); overflow: hidden; }
.p1 { width: 329px; }
.panel h4 { height: 27px; background: #202020; color: #fff; font: 400 21px/24px "Open Sans"; letter-spacing: 0; text-align: center; padding-right: 24px; }
.gh-tools { height: 66px; border: solid #777; border-width: 2px 0 0 3px; background: linear-gradient(#fff, #f4f4f4); display: flex; align-items: center; padding-left: 6px; gap: 18px; }
.zoom { border: 2px solid #777; background: #fff; width: 180px; height: 46px; line-height: 41px; padding-left: 5px; margin-left: 8px; color: #222; letter-spacing: -0.045em; }
.gh-ruler { height: 36px; margin-left: 3px; background: repeating-linear-gradient(135deg, #96948c 0 4px, #8f8d86 4px 8px); border-bottom: 3px solid #111; }
.gh-canvas { height: 1172px; position: relative; margin-left: 3px; background: linear-gradient(90deg, #b8b5ae 2px, transparent 2px) 88px 0/300px 100%, linear-gradient(#bab7b0 2px, transparent 2px) 0 97px/100% 100px, #d3d0c8; overflow: hidden; }
.wires { position: absolute; left: 0; top: 0; }
.metrics { position: absolute; left: 0; top: 713px; width: 278px; height: 449px; border: solid #111; border-width: 3px 3px 3px 0; border-radius: 0 0 10px 0; padding: 1px 0 0 24px; background: linear-gradient(#e8f3f3 0, #c2dede 14px, #9cc8ca 15px, #7fa9ac); list-style: none; font-size: 22px; color: #0c1020; }
.metrics li { height: 40px; line-height: 39px; letter-spacing: -0.02em; }
.plug { position: absolute; left: -8px; top: 904px; width: 24px; height: 59px; border: 3px solid #2c4648; border-radius: 8px; background: linear-gradient(90deg, #000 12px, #8fb9bb 12px); background-clip: content-box; padding: 8px 0; }
.knob { position: absolute; left: -6px; top: 1116px; width: 20px; height: 56px; border: 3px solid #000; background: linear-gradient(#ddd, #777); }
.gh-status { height: 48px; border-top: 4px solid #fff; display: flex; align-items: center; padding: 3px 0 0 6px; color: #111; }
.gh-status span { margin-left: 6px; letter-spacing: -0.028em; }
.gh-status em { margin-left: auto; color: #888; letter-spacing: -0.06em; }
.grip { margin: 4px 2px 0 40px; }

/* design exploration window */
.dse { position: absolute; left: 432px; top: 394px; width: 2510px; height: 1438px; background: #c5c8cd; color: #111; }
.dse-title { height: 59px; background: #808080; color: #fff; display: flex; align-items: center; padding: 2px 0 0 56px; font-size: 29px; letter-spacing: -0.009em; }
.dse-btns { gap: 43px; margin-right: 23px; padding-bottom: 4px; }
.dse-btns svg { stroke: #1a1a1a; }
.dse-tabs { height: 96px; display: grid; grid-template-columns: 270px 207px 194px 316px 189px 160px; padding-left: 54px; font: 300 53px/95px "Open Sans"; letter-spacing: -0.038em; }
.dse-tabs .on { color: #fff; }
.dse-body { display: grid; grid-template-columns: 614px 1fr; }
aside h2 { font: 400 37px/50px "Open Sans"; letter-spacing: 0.003em; }
.dse aside { padding: 23px 0 0 56px; }
.intro { margin-top: 21px; height: 96px; letter-spacing: -0.048em; }
.opt { letter-spacing: -0.053em; }
.evolve { display: flex; margin: 49px 0 64px -10px; align-items: center; }
.evolve button { width: 250px; height: 51px; border: 2px solid #6b6e72; border-radius: 6px; background: none; font: 20px "Open Sans"; letter-spacing: -0.05em; color: #111; padding-top: 2px; }
.evolve label { width: 127px; margin-left: 18px; letter-spacing: -0.06em; padding-top: 2px; }
.spin { width: 124px; height: 51px; border: 3px solid #111; display: flex; align-items: center; justify-content: flex-end; gap: 9px; overflow: hidden; }
.spin svg { margin-right: 3px; }
.opt { margin-top: 20px; line-height: 31.700px; height: 222px; }
.crit-head { display: grid; grid-template-columns: 371px 48px 48px 48px; height: 90px; margin-top: 55px; align-items: end; padding-bottom: 2px; }
.crit-head h2 { margin-bottom: 2px; }
.crit-head span { writing-mode: vertical-rl; transform: rotate(180deg); line-height: 48px; font-size: 22px; justify-self: center; letter-spacing: -0.045em; padding-top: 1px; margin-left: -4px; }
.crit-row { display: grid; grid-template-columns: 53px 204px 29px 87px 48px 48px 48px; align-items: center; margin-top: 23px; height: 40px; letter-spacing: -0.055em; }
.crit-row span:nth-child(3) { margin-left: -5px; }
.bullet { width: 16px; height: 16px; border-radius: 50%; background: #3c3c3c; margin: -4px 0 0 3px; }
.radio { width: 36px; height: 36px; border: 2px solid #7f8994; border-radius: 50%; margin-left: 4px; }
.radio.on { background: radial-gradient(circle, #fff 0 10px, #c5c8cd 11px); }
.cards { display: grid; grid-template-columns: repeat(4, 456px); grid-auto-rows: 404px; gap: 15px 16px; padding-top: 17px; }
article { border: 2px solid #6b6e71; display: grid; }
article header, .draw { grid-area: 1 / 1; }
article header { display: flex; align-items: center; height: 36px; margin: 12px 14px 0 20px; font-size: 25px; }
article header span { padding-top: 2px; min-width: 15px; }
article header i { width: 32px; height: 32px; border-radius: 50%; border: 2px solid #555; background: radial-gradient(circle, #3c3c3c 0 11.500px, transparent 12.500px); margin-left: 39px; }
article header b { width: 36px; height: 36px; border: 2px solid #5d6063; margin-left: auto; }
article header b.on { border-color: #f2f3f5; }
.draw { width: 455px; height: 403px; margin: -1px -2px -2px; }
```
